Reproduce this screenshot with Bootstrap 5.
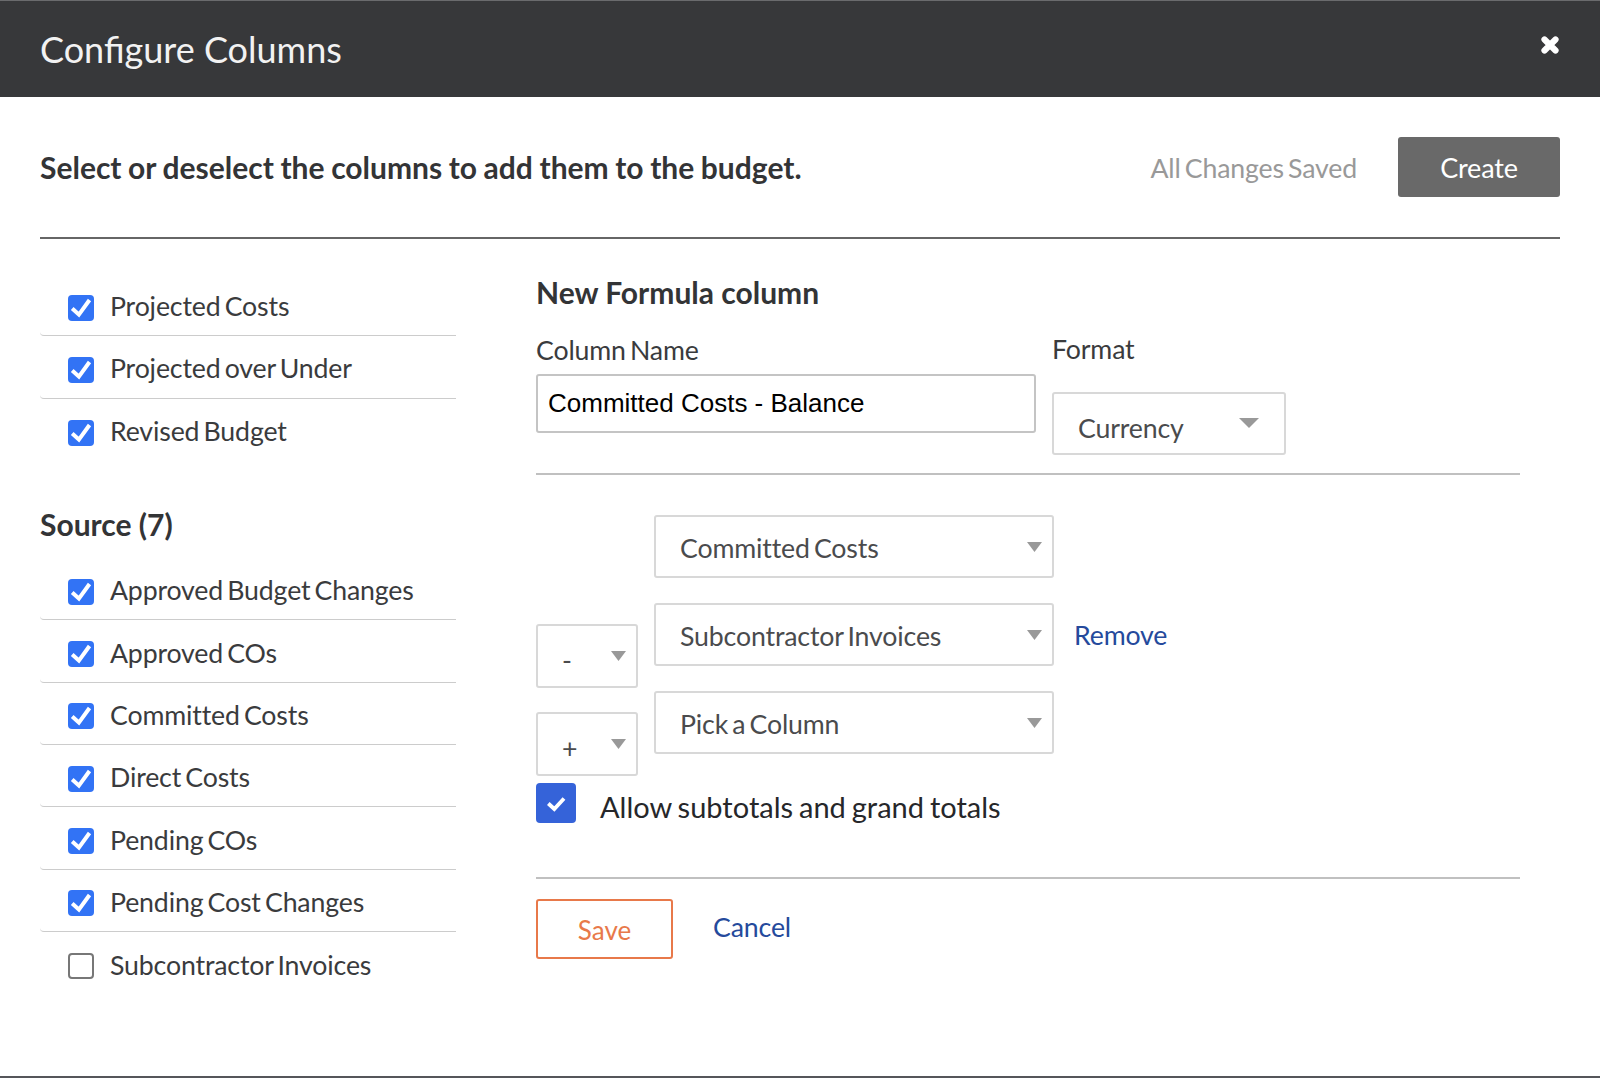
<!DOCTYPE html>
<html lang="en"><head><meta charset="utf-8"><title>Configure Columns</title>
<link href="https://cdn.jsdelivr.net/npm/bootstrap@5.3.0/dist/css/bootstrap.min.css" rel="stylesheet">
<style>
html,body{height:100%;background:#fff}
body{font-family:Lato,"Liberation Sans",sans-serif;color:#3a3b3d;font-size:26.7px;letter-spacing:-.15px;word-spacing:-2.5px;overflow:hidden;text-rendering:optimizeLegibility}
.cc-shell{height:1078px;border-top:1px solid #6a6b6d;border-bottom:2px solid #55565a;background:#fff}
.cc-head{height:96px;background:#37383a;color:#f2f2f2;padding:0 40px}
.cc-title{font-size:36px;font-weight:400;margin:0;line-height:1;letter-spacing:0;word-spacing:0}
.cc-close{width:20px;height:20px;margin:-9px 0 0;padding:0;background:none;border:0;line-height:0}
.cc-main{padding:0 40px}
.cc-top{height:142px;border-bottom:2px solid #666}
.cc-lead{font-size:30px;font-weight:700;margin:0;color:#333436;letter-spacing:0;word-spacing:-.7px}
.cc-saved{color:#999;margin-right:41px;padding-top:2px}
.cc-create{width:162px;height:60px;background:#696969;color:#fff;font-size:27px;border:0;border-radius:3px;padding:2px 0 0;letter-spacing:inherit}
.cc-create:hover{background:#696969;color:#fff}
.cc-cols{padding-top:35px;gap:80px}
.cc-left{width:416px;flex:none}
.cc-right{width:984px;flex:none}
.cc-group{margin:0}
.cc-item{height:62.35px;padding:3px 0 0 28px;border:0;border-bottom:2px solid #ccc;border-radius:0 0 0 4px;font-size:26.7px;color:#3a3b3d;gap:16px;background:transparent}
.cc-check.form-check-input{width:26px;height:26px;margin:3px 0 0;flex:none;border:2px solid #777;border-radius:4px}
.cc-check.form-check-input:checked{background-color:#3273f5;border:0;background-size:26px 26px;background-image:url("data:image/svg+xml,%3Csvg xmlns='http://www.w3.org/2000/svg' viewBox='0 0 26 26'%3E%3Cpath fill='none' stroke='%23fff' stroke-width='4' d='M4.2 13.6l6.7 6 10.6-14.6'/%3E%3C/svg%3E")}
.cc-h3{font-size:30px;font-weight:700;margin:0;color:#333436;line-height:1.2;letter-spacing:0;word-spacing:0}
.cc-source{margin:45px 0 16px}
.cc-head3{line-height:36px}
.cc-label{display:block;margin:0;line-height:34px}
.cc-label-name{margin:23px 0 7px}
.cc-label-fmt{margin:22px 0 26px}
.cc-input.form-control{width:500px;height:59px;border:2px solid #c4c4c4;border-radius:3px;font-family:"Liberation Sans",Arial,sans-serif;font-size:26px;color:#000;padding:0 10px;box-shadow:none;letter-spacing:0;word-spacing:0}
.cc-sel.form-select{height:63px;border:2px solid #d8d8d8;border-radius:3px;font-size:26.7px;color:#4a4b4d;padding:3px 40px 0 24px;box-shadow:none;letter-spacing:inherit;word-spacing:inherit;background-position:right 10px top 25px;background-size:15px 10px;background-image:url("data:image/svg+xml,%3Csvg xmlns='http://www.w3.org/2000/svg' viewBox='0 0 16 12' preserveAspectRatio='none'%3E%3Cpath fill='%23999' d='M0 0h16L8 12z'/%3E%3C/svg%3E")}
.cc-wide{width:400px}
.cc-fmt.form-select{width:234px;padding:9px 40px 0 24px;background-position:right 25px top 24px;background-size:20px 10px}
.cc-op.form-select{width:102px;height:64px;padding:8px 0 0 24px;margin:21px 0 -22px}
.cc-rule{border-bottom:2px solid #c0c0c0;padding-bottom:18px;gap:16px}
.cc-stack{gap:25px;margin-top:40px}
.cc-line{gap:16px}
.cc-op-slot{width:102px;flex:none}
.cc-link{color:#254a9c;text-decoration:none}
.cc-remove{margin:12px 0 0 4px}
.cc-cancel{margin-top:8px}
.cc-big.form-check-input{width:40px;height:40px;margin:0;flex:none;border:0;border-radius:4px;background-color:#3563d9;background-size:40px 40px}
.cc-big.form-check-input:checked{background-color:#3563d9;background-image:url("data:image/svg+xml,%3Csvg xmlns='http://www.w3.org/2000/svg' viewBox='0 0 40 40'%3E%3Cpath fill='none' stroke='%23fff' stroke-width='3.8' d='M12.3 20.5l6 5.5 9.7-10.5'/%3E%3C/svg%3E")}
.cc-allow{gap:24px;margin-top:29px;padding-bottom:50px;border-bottom:2px solid #c0c0c0}
.cc-allow-text{font-size:29px;line-height:40px;padding-top:4px;color:#26272a;letter-spacing:0;word-spacing:-1.5px}
.cc-actions{gap:40px;margin-top:20px}
.cc-save{width:137px;height:60px;border:2px solid #e8794a;color:#e8794a;background:#fff;border-radius:3px;font-size:26px;padding:2px 0 0}
.cc-save:hover{background:#fff;color:#e8794a;border-color:#e8794a}
</style></head><body>
<div class="cc-shell">
 <div class="cc-head d-flex align-items-center justify-content-between">
  <h1 class="cc-title">Configure Columns</h1>
  <button class="cc-close" type="button" aria-label="Close"><svg width="20" height="20" viewBox="0 0 20 20"><path d="M4.5 4.5l11 11M15.5 4.5l-11 11" stroke="#fff" stroke-width="6.2" stroke-linecap="round"/></svg></button>
 </div>
 <div class="cc-main">
  <div class="cc-top d-flex align-items-center justify-content-between">
   <p class="cc-lead">Select or deselect the columns to add them to the budget.</p>
   <div class="d-flex align-items-center"><span class="cc-saved">All Changes Saved</span><button class="btn cc-create" type="button">Create</button></div>
  </div>
  <div class="d-flex cc-cols">
   <div class="cc-left">
    <div class="list-group list-group-flush cc-group">
     <label class="list-group-item d-flex align-items-center cc-item"><input class="form-check-input cc-check" type="checkbox" checked>Projected Costs</label>
     <label class="list-group-item d-flex align-items-center cc-item"><input class="form-check-input cc-check" type="checkbox" checked>Projected over Under</label>
     <label class="list-group-item d-flex align-items-center cc-item"><input class="form-check-input cc-check" type="checkbox" checked>Revised Budget</label>
    </div>
    <h2 class="cc-h3 cc-source">Source (7)</h2>
    <div class="list-group list-group-flush cc-group">
     <label class="list-group-item d-flex align-items-center cc-item"><input class="form-check-input cc-check" type="checkbox" checked>Approved Budget Changes</label>
     <label class="list-group-item d-flex align-items-center cc-item"><input class="form-check-input cc-check" type="checkbox" checked>Approved COs</label>
     <label class="list-group-item d-flex align-items-center cc-item"><input class="form-check-input cc-check" type="checkbox" checked>Committed Costs</label>
     <label class="list-group-item d-flex align-items-center cc-item"><input class="form-check-input cc-check" type="checkbox" checked>Direct Costs</label>
     <label class="list-group-item d-flex align-items-center cc-item"><input class="form-check-input cc-check" type="checkbox" checked>Pending COs</label>
     <label class="list-group-item d-flex align-items-center cc-item"><input class="form-check-input cc-check" type="checkbox" checked>Pending Cost Changes</label>
     <label class="list-group-item d-flex align-items-center cc-item"><input class="form-check-input cc-check" type="checkbox">Subcontractor Invoices</label>
    </div>
   </div>
   <div class="cc-right">
    <h2 class="cc-h3 cc-head3">New Formula column</h2>
    <div class="d-flex align-items-start cc-rule">
     <div><label class="cc-label cc-label-name">Column Name</label><input class="form-control cc-input" type="text" value="Committed Costs - Balance"></div>
     <div><label class="cc-label cc-label-fmt">Format</label><select class="form-select cc-sel cc-fmt"><option>Currency</option></select></div>
    </div>
    <div class="d-flex flex-column cc-stack">
     <div class="d-flex align-items-start cc-line"><div class="cc-op-slot"></div><select class="form-select cc-sel cc-wide"><option>Committed Costs</option></select></div>
     <div class="d-flex align-items-start cc-line"><select class="form-select cc-sel cc-op"><option>-</option></select><select class="form-select cc-sel cc-wide"><option>Subcontractor Invoices</option></select><a class="cc-link cc-remove" href="#">Remove</a></div>
     <div class="d-flex align-items-start cc-line"><select class="form-select cc-sel cc-op"><option>+</option></select><select class="form-select cc-sel cc-wide"><option>Pick a Column</option></select></div>
    </div>
    <div class="d-flex align-items-start cc-allow"><input class="form-check-input cc-big" type="checkbox" checked><span class="cc-allow-text">Allow subtotals and grand totals</span></div>
    <div class="d-flex align-items-start cc-actions"><button class="btn cc-save" type="button">Save</button><a class="cc-link cc-cancel" href="#">Cancel</a></div>
   </div>
  </div>
 </div>
</div>
<script src="https://cdn.jsdelivr.net/npm/bootstrap@5.3.0/dist/js/bootstrap.bundle.min.js"></script>
</body></html>
